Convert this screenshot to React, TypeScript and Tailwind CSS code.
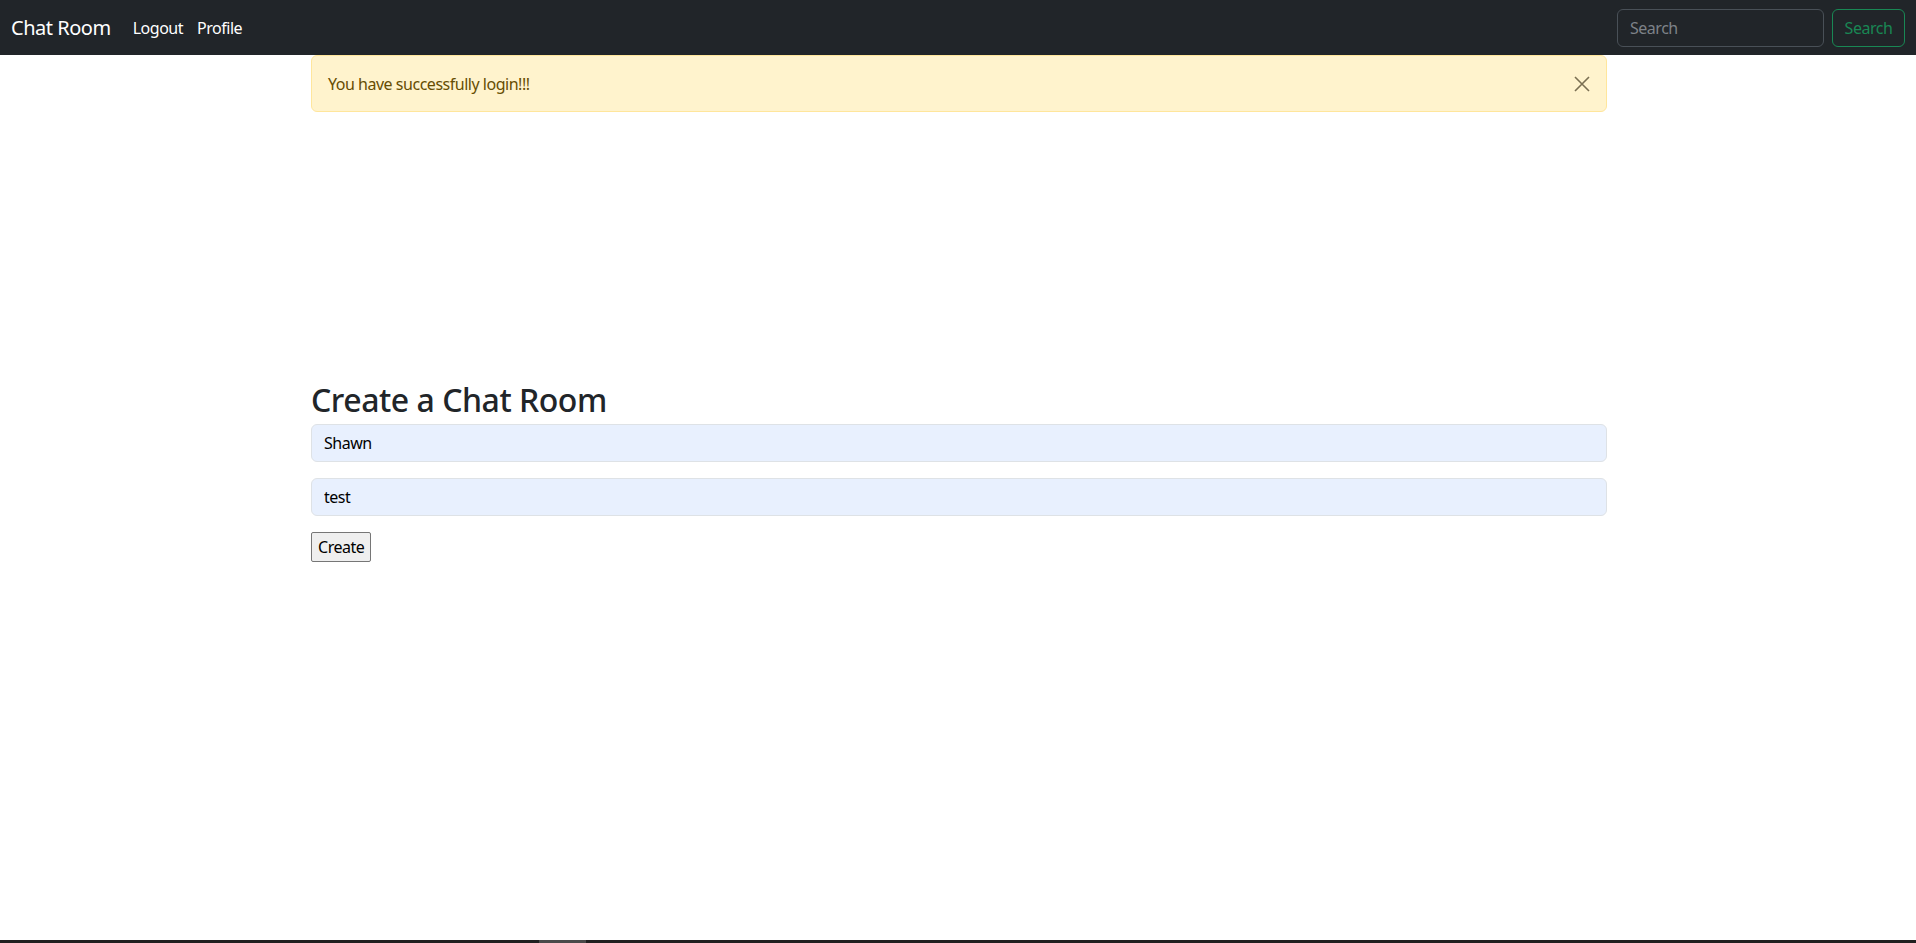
import React from 'react';

const font = { fontFamily: '"Noto Sans", "Open Sans", sans-serif' };

const Navbar: React.FC = () => (
  <nav className="h-[55px] bg-[#212529] flex items-center justify-between px-[11px]">
    <div className="flex items-center">
      <span className="text-[20px] text-white mr-[22px] leading-none">Chat Room</span>
      <a className="text-[16px] text-white mr-[14px] leading-none">Logout</a>
      <a className="text-[16px] text-white leading-none">Profile</a>
    </div>
    <form className="flex items-center gap-2" onSubmit={(e) => e.preventDefault()}>
      <input
        placeholder="Search"
        className="w-[207px] h-[38px] rounded-[6px] border border-[#495057] bg-[#212529] px-3 text-[16px] text-white placeholder:text-[#7d8288] outline-none tracking-[-0.03em]"
      />
      <button className="h-[38px] w-[73px] rounded-[6px] border border-[#198754] text-[#198754] text-[16px]">
        Search
      </button>
    </form>
  </nav>
);

export default function App() {
  return (
    <div className="min-h-[943px] bg-white flex flex-col tracking-[-0.03em]" style={font}>
      <Navbar />
      <main className="flex-1 w-[1296px] ml-[311px]">
        <div className="h-[57px] rounded-[6px] border border-[#ffe69c] bg-[#fff3cd] text-[#664d03] flex items-center justify-between px-4 text-[16px]">
          <span>You have successfully login!!!</span>
          <button className="w-[16px] h-[16px] text-[#7a6f52]" aria-label="Close">
            <svg viewBox="0 0 16 16" className="w-[16px] h-[16px]" fill="none" stroke="currentColor" strokeWidth="1.6">
              <path d="M1 1L15 15M15 1L1 15" />
            </svg>
          </button>
        </div>
        <h2 className="mt-[269px] text-[32px] font-medium leading-[1.2] text-[#212529] mb-[5px]">Create a Chat Room</h2>
        <input
          defaultValue="Shawn"
          className="block w-full h-[38px] rounded-[6px] border border-[#dee2e6] bg-[#e8f0fe] px-3 text-[16px] text-black outline-none tracking-[-0.03em]"
        />
        <input
          defaultValue="test"
          className="block w-full h-[38px] mt-[16px] rounded-[6px] border border-[#dee2e6] bg-[#e8f0fe] px-3 text-[16px] text-black outline-none tracking-[-0.03em]"
        />
        <button className="mt-[16px] h-[30px] px-[6px] rounded-[2px] border border-[#767676] bg-[#efefef] text-[16px] text-black leading-none">
          Create
        </button>
      </main>
      <div className="h-[3px] bg-[#202020] flex">
        <div className="ml-[539px] w-[47px] h-full bg-[#4a4a4a]" />
      </div>
    </div>
  );
}
